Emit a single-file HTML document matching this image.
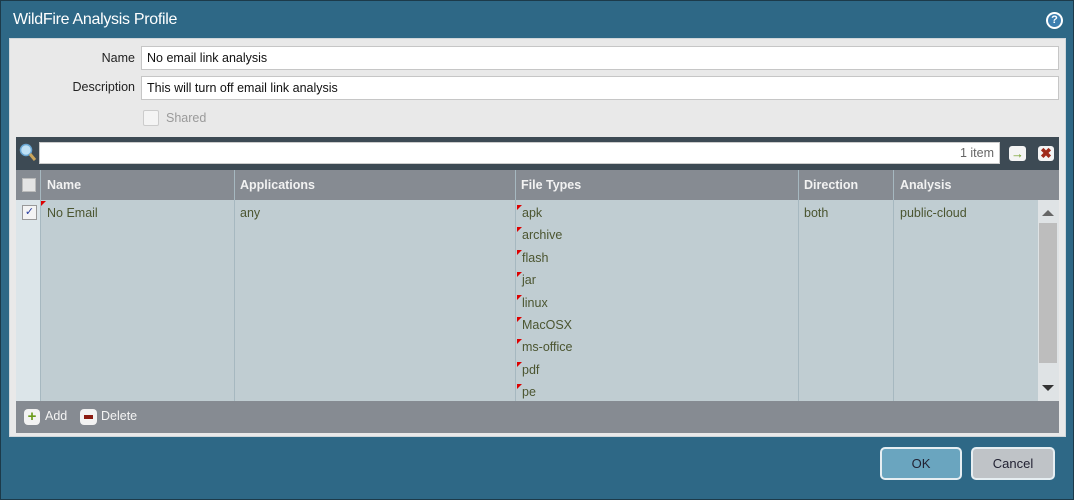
<!DOCTYPE html>
<html><head><style>
*{margin:0;padding:0;box-sizing:border-box}
body{width:1074px;height:500px;background:#2e6886;font-family:"Liberation Sans",sans-serif;font-size:12.5px;position:relative;overflow:hidden;box-shadow:inset 0 0 0 1px #1c3a4a}
.a{position:absolute}
.title{left:13px;top:11px;color:#fff;font-size:16px;letter-spacing:-0.3px}
.panel{left:9px;top:38px;width:1057px;height:399px;background:#e9e9e9;border:1px solid #cfd6da}
.lbl{color:#222;text-align:right;width:125px}
.inp{background:#fff;border:1px solid #c6c6c6;height:24px;padding:4px 5px;color:#111}
.grid{left:16px;top:137px;width:1043px;height:296px;background:#c0cdd2}
.search{left:0;top:0;width:1043px;height:33px;background:#3d4a54}
.hdr{left:0;top:33px;width:1043px;height:30px;background:#868b92;color:#f2f2f2;font-weight:bold}
.foot{left:0;top:264px;width:1043px;height:32px;background:#868b92;color:#f4f4f4}
.vl{position:absolute;top:33px;width:1px;height:231px;background:#a6b8c0}
.cell{color:#4b5530}
.ft div{position:relative;height:22.4px;padding-left:6px}
.ft div:before{content:"";position:absolute;left:1px;top:-1px;border-top:5px solid #d00;border-right:5px solid transparent}
.btn{top:447px;height:33px;border:2px solid #e6eef2;border-radius:5px;text-align:center;line-height:29px;color:#223;font-size:13px}
</style></head><body>
<div class="a title">WildFire Analysis Profile</div>
<div class="a" style="left:1046px;top:12px;width:17px;height:17px;border-radius:50%;background:#fff;"><div style="margin:2px;width:13px;height:13px;border-radius:50%;background:#3d7fb0;color:#fff;font-size:11px;font-weight:bold;text-align:center;line-height:13px">?</div></div>
<div class="a panel"></div>
<div class="a lbl" style="left:10px;top:51px">Name</div>
<div class="a inp" style="left:141px;top:46px;width:918px">No email link analysis</div>
<div class="a lbl" style="left:10px;top:80px">Description</div>
<div class="a inp" style="left:141px;top:76px;width:918px">This will turn off email link analysis</div>
<div class="a" style="left:143px;top:110px;width:16px;height:16px;border:1px solid #ccc;background:#f4f4f4;border-radius:2px"></div>
<div class="a" style="left:166px;top:111px;color:#9a9a9a">Shared</div>
<div class="a grid">
 <div class="a search">
  <svg class="a" style="left:3px;top:6px" width="18" height="20"><circle cx="7" cy="7" r="5.5" fill="#bfe0f5" stroke="#6aa7d4" stroke-width="1.5"/><line x1="11" y1="11" x2="16" y2="17" stroke="#c9a45a" stroke-width="3"/></svg>
  <div class="a" style="left:23px;top:5px;width:961px;height:22px;background:#fff;border:1px solid #ccc;text-align:right;padding:3px 5px;color:#666">1 item</div>
  <div class="a" style="left:993px;top:9px;width:17px;height:15px;background:#f4f4f4;border-radius:3px;color:#6a9a1a;font-weight:bold;text-align:center;line-height:15px;font-size:13px">→</div>
  <div class="a" style="left:1022px;top:9px;width:16px;height:15px;background:#f4f4f4;border-radius:3px;color:#a02a1a;font-weight:bold;text-align:center;line-height:15px;font-size:14px">✖</div>
 </div>
 <div class="a hdr">
  <div class="a" style="left:6px;top:8px;width:14px;height:14px;background:#e4e4e4;border:1px solid #bbb"></div>
  <div class="a" style="left:31px;top:8px">Name</div>
  <div class="a" style="left:224px;top:8px">Applications</div>
  <div class="a" style="left:505px;top:8px">File Types</div>
  <div class="a" style="left:788px;top:8px">Direction</div>
  <div class="a" style="left:884px;top:8px">Analysis</div>
 </div>
 <div class="a" style="left:0;top:63px;width:24px;height:201px;background:#dce5e9"></div>
 <div class="vl" style="left:24px"></div><div class="vl" style="left:218px"></div><div class="vl" style="left:499px"></div><div class="vl" style="left:782px"></div><div class="vl" style="left:877px"></div>
 <div class="a" style="left:6px;top:68px;width:15px;height:15px;background:#f4f4f4;border:1px solid #999;color:#2a3fa0;font-size:11px;text-align:center;line-height:13px">✓</div>
 <div class="a" style="left:25px;top:64px;border-top:5px solid #d00;border-right:5px solid transparent"></div>
 <div class="a cell" style="left:31px;top:69px">No Email</div>
 <div class="a cell" style="left:224px;top:69px">any</div>
 <div class="a cell ft" style="left:500px;top:69px">
  <div>apk</div><div>archive</div><div>flash</div><div>jar</div><div>linux</div><div>MacOSX</div><div>ms-office</div><div>pdf</div><div>pe</div>
 </div>
 <div class="a cell" style="left:788px;top:69px">both</div>
 <div class="a cell" style="left:884px;top:69px">public-cloud</div>
 <div class="a" style="left:1022px;top:63px;width:21px;height:201px;background:#dfe3e5"></div>
 <div class="a" style="left:1023px;top:86px;width:18px;height:140px;background:#bdbdbd"></div>
 <div class="a" style="left:1026px;top:73px;border-bottom:6px solid #666;border-left:6px solid transparent;border-right:6px solid transparent"></div>
 <div class="a" style="left:1026px;top:248px;border-top:6px solid #333;border-left:6px solid transparent;border-right:6px solid transparent"></div>
 <div class="a foot">
  <div class="a" style="left:8px;top:8px;width:16px;height:16px;border-radius:4px;background:#f2f2f2;color:#6a9a1a;font-weight:bold;text-align:center;line-height:16px;font-size:15px">+</div>
  <div class="a" style="left:29px;top:8px">Add</div>
  <div class="a" style="left:64px;top:8px;width:17px;height:16px;border-radius:4px;background:#f2f2f2"><div style="margin:6px 4px;height:4px;background:#8a1a10"></div></div>
  <div class="a" style="left:85px;top:8px">Delete</div>
 </div>
</div>
<div class="a btn" style="left:880px;width:82px;background:#6aa5bf">OK</div>
<div class="a btn" style="left:971px;width:84px;background:#bfc3c7">Cancel</div>
</body></html>
